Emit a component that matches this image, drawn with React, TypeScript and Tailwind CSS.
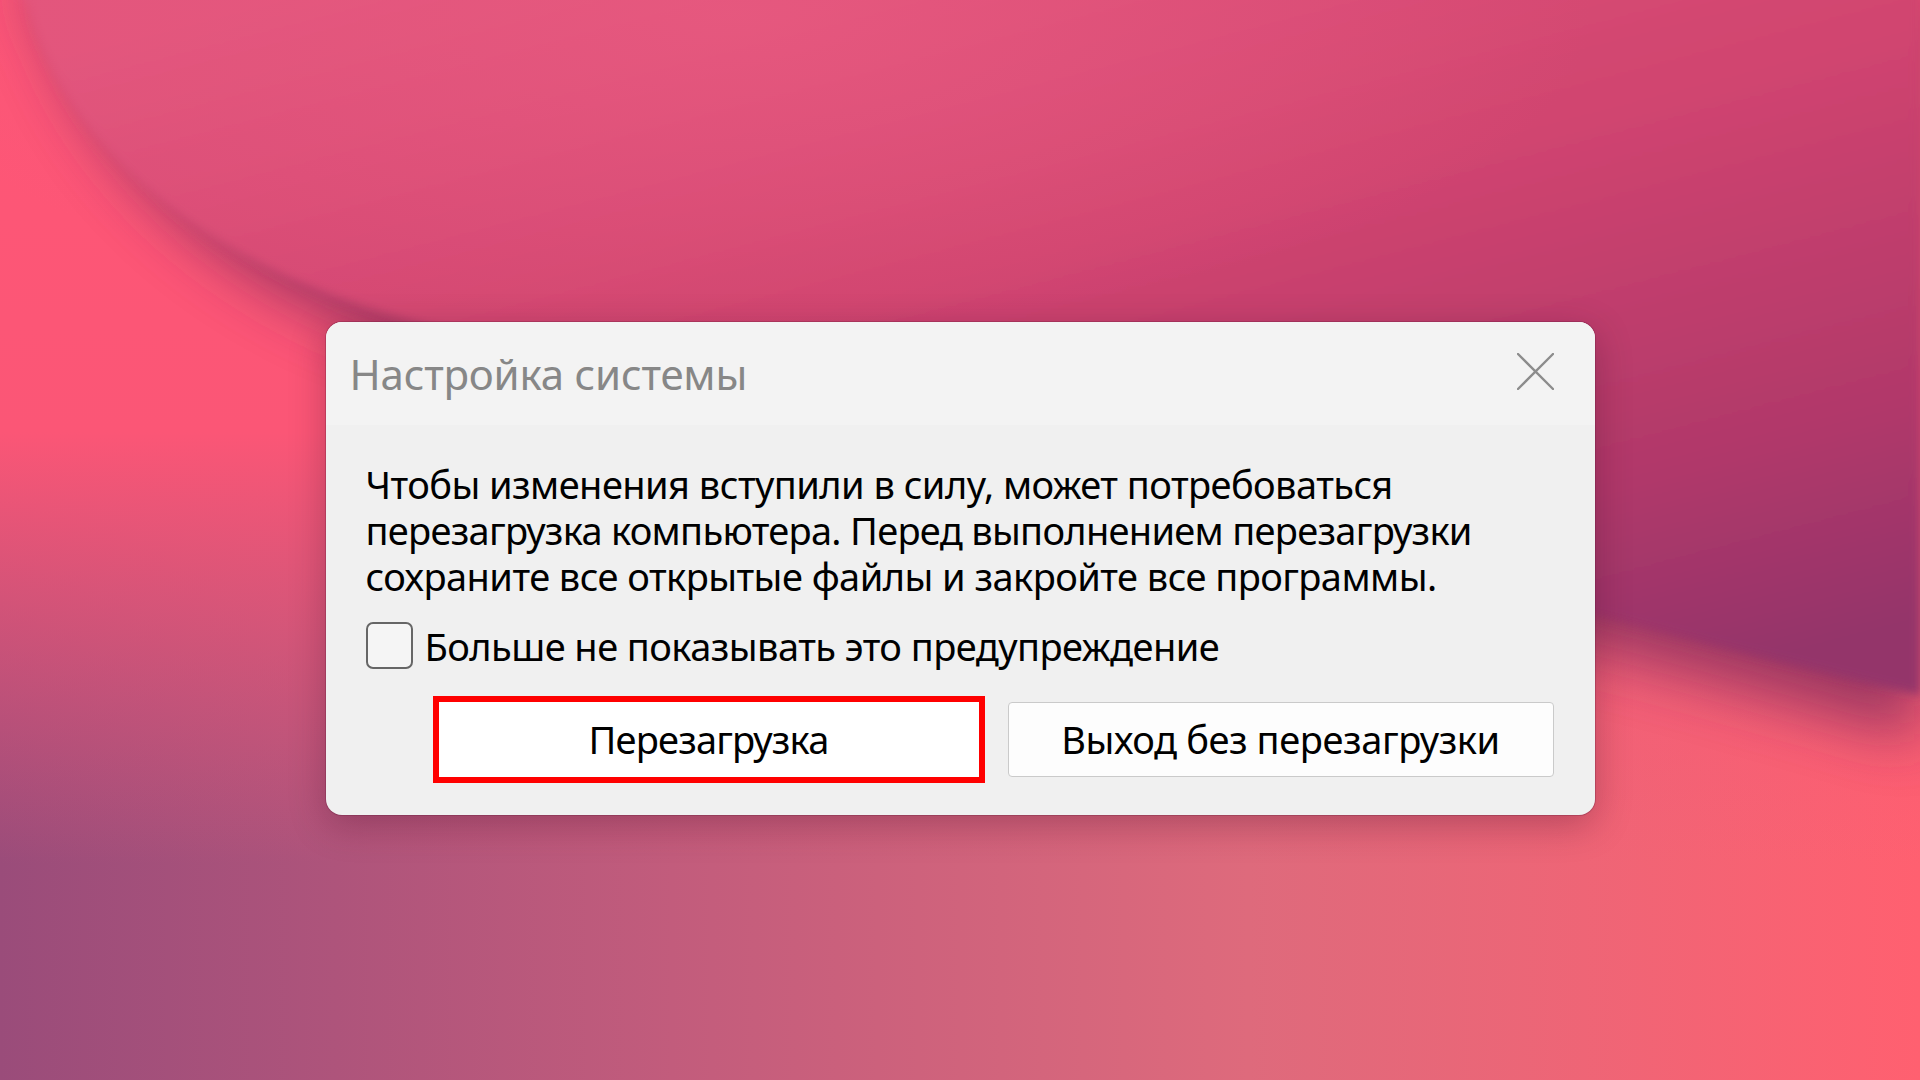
import React from "react";

function Wallpaper() {
  return (
    <svg
      className="col-start-1 row-start-1 h-full w-full"
      viewBox="0 0 1920 1080"
      preserveAspectRatio="none"
    >
      <defs>
        <linearGradient id="bottom" x1="0" y1="0" x2="1" y2="0">
          <stop offset="0" stopColor="#9a4c7a" />
          <stop offset="0.35" stopColor="#c25c7c" />
          <stop offset="0.65" stopColor="#de6a7c" />
          <stop offset="1" stopColor="#ff6070" />
        </linearGradient>
        <linearGradient id="coral" x1="0" y1="0" x2="0" y2="1">
          <stop offset="0" stopColor="#ff5676" stopOpacity="1" />
          <stop offset="0.4" stopColor="#fb5676" stopOpacity="1" />
          <stop offset="0.8" stopColor="#f25a78" stopOpacity="0" />
        </linearGradient>
        <linearGradient id="blob" x1="0.15" y1="0" x2="0.85" y2="1">
          <stop offset="0" stopColor="#e2557c" />
          <stop offset="0.45" stopColor="#d0446f" />
          <stop offset="0.8" stopColor="#b0386a" />
          <stop offset="1" stopColor="#94346a" />
        </linearGradient>
        <radialGradient id="glow" cx="0.38" cy="0.02" r="0.45">
          <stop offset="0" stopColor="#e85a80" stopOpacity="0.8" />
          <stop offset="1" stopColor="#e85a80" stopOpacity="0" />
        </radialGradient>
        <filter id="soft" x="-20%" y="-20%" width="140%" height="140%">
          <feGaussianBlur stdDeviation="30" />
        </filter>
        <filter id="edge" x="-5%" y="-5%" width="110%" height="110%">
          <feGaussianBlur stdDeviation="5" />
        </filter>
      </defs>
      <rect width="1920" height="1080" fill="url(#bottom)" />
      <rect width="1920" height="1080" fill="url(#coral)" />
      <path
        d="M0 -20 L40 0 C80 160 240 320 500 370 C830 450 1250 550 1560 640 C1720 680 1850 720 1920 740 L1920 -20 Z"
        fill="#7c2c5c"
        opacity="0.75"
        filter="url(#soft)"
      />
      <path
        d="M0 -20 L26 0 C60 150 220 285 470 335 C800 420 1230 520 1540 600 C1710 645 1850 680 1920 695 L1920 -20 Z"
        fill="url(#blob)"
        filter="url(#edge)"
      />
      <rect width="1920" height="700" fill="url(#glow)" />
    </svg>
  );
}

const lines = [
  "Чтобы изменения вступили в силу, может потребоваться",
  "перезагрузка компьютера. Перед выполнением перезагрузки",
  "сохраните все открытые файлы и закройте все программы.",
];

export default function App() {
  return (
    <div className="grid h-screen w-screen overflow-hidden bg-[#d04a74]">
      <Wallpaper />

      <div className="col-start-1 row-start-1 flex justify-center pt-[322px]">
        <div className="flex h-[493px] w-[1269px] flex-col overflow-hidden rounded-[16px] bg-[#f0f0f0] font-['Noto_Sans',sans-serif] tracking-[-0.55px] shadow-[0_0_0_1px_rgba(90,20,50,0.25),0_10px_36px_rgba(60,10,40,0.3)]">
          {/* title bar */}
          <div className="flex h-[103px] shrink-0 items-center justify-between bg-[#f3f3f3] pl-[24px] pr-[41px]">
            <span className="text-[42px] leading-none tracking-[-0.2px] text-[#878787]">Настройка системы</span>
            <svg width="37" height="37" viewBox="0 0 37 37" className="mb-[5px]">
              <path d="M1 1 L36 36 M36 1 L1 36" stroke="#8c8c8c" strokeWidth="2.4" strokeLinecap="round" />
            </svg>
          </div>

          {/* body */}
          <div className="flex flex-1 flex-col pl-[40px] pr-[41px] pt-[36px]">
            <div className="text-[38px] leading-[46px] text-black">
              {lines.map((l, i) => (
                <div key={l} className={i === 1 ? "h-[46px] whitespace-nowrap tracking-[-0.7px]" : "h-[46px] whitespace-nowrap"}>
                  {l}
                </div>
              ))}
            </div>

            <label className="mt-[23px] flex items-center gap-[12px]">
              <span className="h-[47px] w-[47px] rounded-[7px] border-2 border-[#666666] bg-[#f5f5f5]" />
              <span className="whitespace-nowrap text-[38px] leading-[46px] text-black">
                Больше не показывать это предупреждение
              </span>
            </label>

            <div className="mt-[27px] flex items-center justify-end gap-[23px]">
              <button className="flex h-[87px] w-[552px] items-center justify-center border-[6px] border-[#ff0000] bg-white text-[38px] tracking-[-0.8px] text-black">
                Перезагрузка
              </button>
              <button className="flex h-[75px] w-[546px] items-center justify-center rounded-[4px] border border-[#cacaca] bg-[#fdfdfd] text-[38px] tracking-[-0.4px] text-black">
                Выход без перезагрузки
              </button>
            </div>
          </div>
        </div>
      </div>
    </div>
  );
}
